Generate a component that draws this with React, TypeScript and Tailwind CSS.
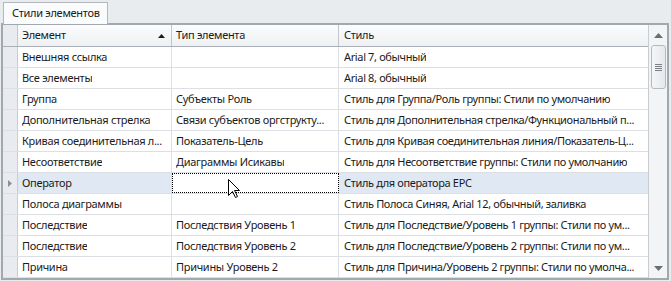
import React from "react";

type Row = { a: string; b: string; c: string; sel?: boolean };

const rows: Row[] = [
  { a: "Внешняя ссылка", b: "", c: "Arial 7, обычный" },
  { a: "Все элементы", b: "", c: "Arial 8, обычный" },
  { a: "Группа", b: "Субъекты Роль", c: "Стиль для Группа/Роль группы: Стили по умолчанию" },
  { a: "Дополнительная стрелка", b: "Связи субъектов оргструкту...", c: "Стиль для Дополнительная стрелка/Функциональный п..." },
  { a: "Кривая соединительная л...", b: "Показатель-Цель", c: "Стиль для Кривая соединительная линия/Показатель-Ц..." },
  { a: "Несоответствие", b: "Диаграммы Исикавы", c: "Стиль для Несоответствие группы: Стили по умолчанию" },
  { a: "Оператор", b: "", c: "Стиль для оператора EPC", sel: true },
  { a: "Полоса диаграммы", b: "", c: "Стиль Полоса Синяя, Arial 12, обычный, заливка" },
  { a: "Последствие", b: "Последствия Уровень 1", c: "Стиль для Последствие/Уровень 1 группы: Стили по ум..." },
  { a: "Последствие", b: "Последствия Уровень 2", c: "Стиль для Последствие/Уровень 2 группы: Стили по ум..." },
  { a: "Причина", b: "Причины Уровень 2", c: "Стиль для Причина/Уровень 2 группы: Стили по умолча..." },
];

export default function App() {
  return (
    <div
      className="w-[671px] h-[281px] bg-[#e9ecef] overflow-hidden text-[11px] tracking-[-0.3px] text-[#1b1b1b] relative"
      style={{ fontFamily: '"Noto Sans", "DejaVu Sans", sans-serif' }}
    >
      <div className="flex pl-[3px] pt-[1px]">
        <div className="h-[22px] w-[105px] pl-[8px] flex items-center bg-[#fafbfc] border border-b-0 border-[#b4b8bd] text-[#202020] relative top-[1px]">
          Стили элементов
        </div>
      </div>
      <div className="mx-[1px] w-[668px] border-2 border-[#a3a8ae] flex bg-white">
        <div className="flex-1 flex flex-col min-w-0">
          {/* header */}
          <div className="flex h-[22px] border-b border-[#a9afb7] bg-gradient-to-b from-[#fbfcfd] to-[#eef0f3]">
            <div className="w-[15px] shrink-0 border-r border-[#c3c7cc] bg-[#e9ebee]" />
            <div className="w-[154px] shrink-0 border-r border-[#c3c7cc] flex items-center pl-[4px] pr-[6px]">
              <span className="flex-1">Элемент</span>
              <svg width="7" height="4" viewBox="0 0 7 4">
                <path d="M0 4 L3.5 0 L7 4 Z" fill="#1a1a1a" />
              </svg>
            </div>
            <div className="w-[167px] shrink-0 border-r border-[#c3c7cc] flex items-center pl-[4px]">Тип элемента</div>
            <div className="flex-1 flex items-center pl-[5px]">Стиль</div>
          </div>
          {rows.map((r, i) => (
            <div key={i} className={`flex h-[21px] border-b border-[#dcdfe3] ${r.sel ? "bg-[#dfe8f3]" : "bg-white"}`}>
              <div className="w-[15px] shrink-0 border-r border-[#c9cdd2] bg-[#e9ebee] flex items-center justify-center">
                {r.sel && (
                  <svg width="4" height="7" viewBox="0 0 4 7">
                    <path d="M0 0 L4 3.5 L0 7 Z" fill="#8c8f93" />
                  </svg>
                )}
              </div>
              <div className="w-[154px] shrink-0 border-r border-[#dcdfe3] flex items-center pl-[4px] min-w-0">
                <span className="whitespace-nowrap overflow-hidden">{r.a}</span>
              </div>
              <div
                className={`w-[167px] shrink-0 flex items-center pl-[4px] min-w-0 ${
                  r.sel ? "bg-white border border-dotted border-black" : "border-r border-[#dcdfe3]"
                }`}
              >
                <span className="whitespace-nowrap overflow-hidden">{r.b}</span>
              </div>
              <div className="flex-1 flex items-center pl-[5px] min-w-0">
                <span className="whitespace-nowrap overflow-hidden tracking-[-0.36px]">{r.c}</span>
              </div>
            </div>
          ))}
        </div>
        {/* scrollbar */}
        <div className="w-[19px] shrink-0 border-l border-[#c9cdd2] bg-[#f3f4f6] flex flex-col items-center">
          <div className="h-[20px] flex items-center justify-center">
            <svg width="9" height="5" viewBox="0 0 9 5">
              <path d="M0 5 L4.5 0 L9 5 Z" fill="#6b6e72" />
            </svg>
          </div>
          <div className="w-[15px] h-[44px] rounded-[3px] border border-[#b5b9be] bg-gradient-to-r from-[#f4f5f7] to-[#e6e8eb] flex flex-col items-center justify-center gap-[1px]">
            <div className="w-[7px] h-px bg-[#7d8186]" />
            <div className="w-[7px] h-px bg-[#7d8186]" />
            <div className="w-[7px] h-px bg-[#7d8186]" />
            <div className="w-[7px] h-px bg-[#7d8186]" />
          </div>
          <div className="flex-1" />
          <div className="h-[20px] flex items-center justify-center">
            <svg width="9" height="5" viewBox="0 0 9 5">
              <path d="M0 0 L4.5 5 L9 0 Z" fill="#6b6e72" />
            </svg>
          </div>
        </div>
      </div>
      {/* mouse cursor */}
      <svg className="absolute left-[228px] top-[179px]" width="13" height="20" viewBox="0 0 13 20">
        <path d="M0.5 0.5 L0.5 16.5 L4.5 12.5 L7.5 18.5 L9.5 17.5 L6.5 11.5 L11.5 11.5 Z" fill="white" stroke="black" strokeWidth="1" />
      </svg>
    </div>
  );
}
